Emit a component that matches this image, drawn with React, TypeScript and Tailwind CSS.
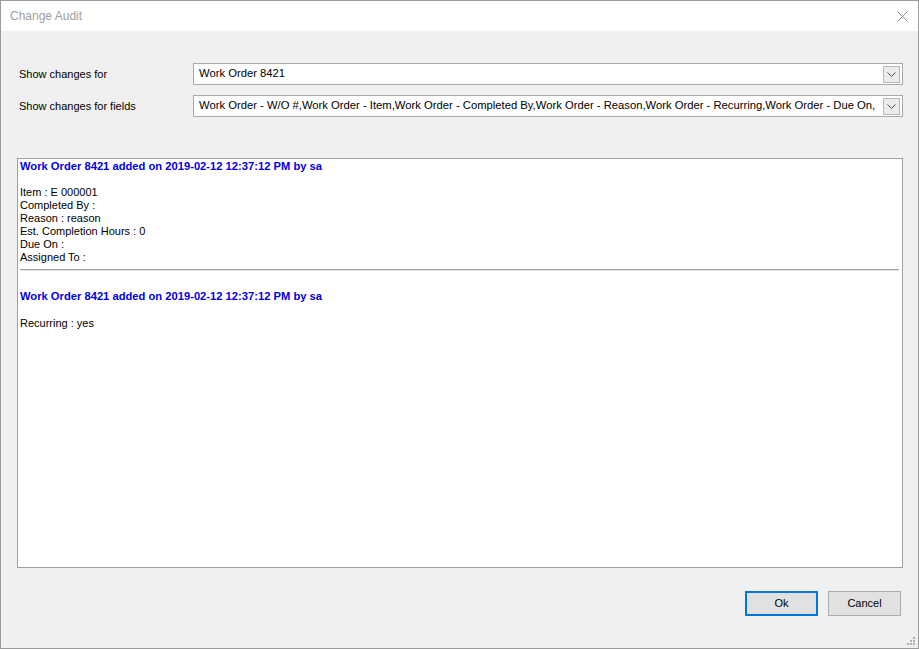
import React from "react";

function Chevron() {
  return (
    <svg width="9" height="5" viewBox="0 0 9 5" fill="none">
      <path d="M0.5 0.5 L4.5 4.5 L8.5 0.5" stroke="#555" strokeWidth="1" />
    </svg>
  );
}

function Combo({ text }: { text: string }) {
  return (
    <div className="flex h-[22px] w-[710px] items-center border border-[#a9a9a9] bg-white pl-[5px] pr-[2px]">
      <div className="flex-1 overflow-hidden whitespace-nowrap text-[11.25px] leading-none text-black">{text}</div>
      <div className="flex h-[17px] w-[17px] items-center justify-center border border-[#b8b8b8] bg-[#ececec]">
        <Chevron />
      </div>
    </div>
  );
}

export default function App() {
  const fields =
    "Work Order - W/O #,Work Order - Item,Work Order - Completed By,Work Order - Reason,Work Order - Recurring,Work Order - Due On,";
  return (
    <div
      className="flex h-[649px] w-[919px] flex-col border border-[#9a9a9a] bg-[#f0f0f0]"
      style={{ fontFamily: '"Liberation Sans", Arial, sans-serif' }}
    >
      <div className="flex h-[30px] items-center justify-between bg-white pl-[9px] pr-[10px]">
        <span className="text-[12px] text-[#a0a0a0]">Change Audit</span>
        <svg width="11" height="11" viewBox="0 0 11 11">
          <path d="M0.5 0.5 L10.5 10.5 M10.5 0.5 L0.5 10.5" stroke="#909090" strokeWidth="1" />
        </svg>
      </div>
      <div className="relative flex flex-1 flex-col pl-[16px] pr-[15px]">
        <div className="mt-[32px] flex items-center">
          <div className="w-[176px] pl-[2px] text-[11px] text-black">Show changes for</div>
          <Combo text="Work Order 8421" />
        </div>
        <div className="mt-[10px] flex items-center">
          <div className="w-[176px] pl-[2px] text-[11px] text-black">Show changes for fields</div>
          <Combo text={fields} />
        </div>
        <div className="mt-[41px] h-[410px] w-[886px] border border-[#a0a0a0] bg-white pl-[2px] pr-[3px] pt-[1px] text-[11px] leading-[13px] text-black">
          <div className="text-[11.2px] font-bold text-[#0000e6]">Work Order 8421 added on 2019-02-12 12:37:12 PM by sa</div>
          <div className="h-[13px]" />
          <div>Item : E 000001</div>
          <div>Completed By :</div>
          <div>Reason : reason</div>
          <div>Est. Completion Hours : 0</div>
          <div>Due On :</div>
          <div>Assigned To :</div>
          <div className="mt-[5px] h-[2px] border-t border-[#a0a0a0] border-b border-b-[#e3e3e3]" />
          <div className="h-[19px]" />
          <div className="text-[11.2px] font-bold text-[#0000e6]">Work Order 8421 added on 2019-02-12 12:37:12 PM by sa</div>
          <div className="h-[14px]" />
          <div>Recurring : yes</div>
        </div>
        <div className="mr-[2px] mt-[23px] flex justify-end gap-[10px]">
          <button className="h-[25px] w-[73px] border-2 border-[#0078d7] bg-[#e1e1e1] text-[11px] text-black">Ok</button>
          <button className="h-[25px] w-[73px] border border-[#adadad] bg-[#e1e1e1] text-[11px] text-black">Cancel</button>
        </div>
        <svg className="absolute bottom-[2px] right-[2px]" width="9" height="9" viewBox="0 0 9 9">
          <g fill="#b0b0b0">
            <rect x="6" y="0" width="2" height="2" />
            <rect x="3" y="3" width="2" height="2" />
            <rect x="6" y="3" width="2" height="2" />
            <rect x="0" y="6" width="2" height="2" />
            <rect x="3" y="6" width="2" height="2" />
            <rect x="6" y="6" width="2" height="2" />
          </g>
        </svg>
      </div>
    </div>
  );
}
